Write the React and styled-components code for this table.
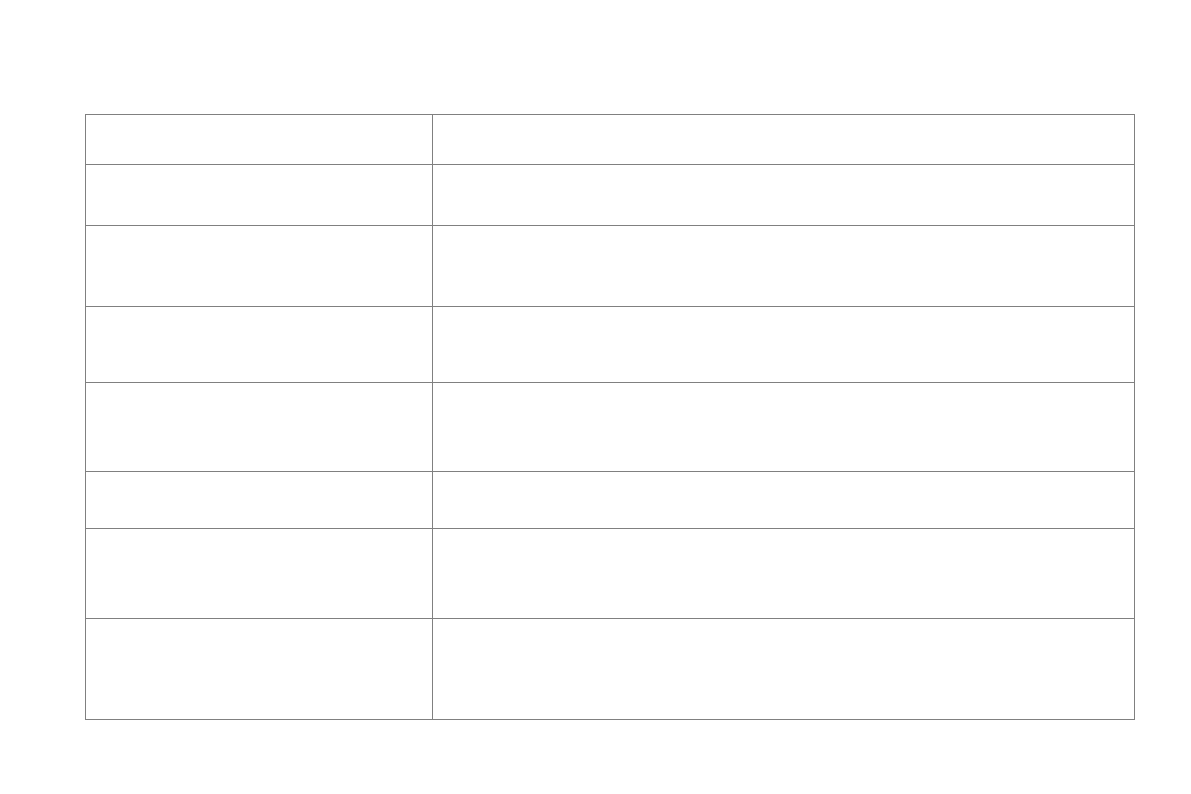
import styled, { createGlobalStyle } from "styled-components";

// style

const GlobalStyle = createGlobalStyle`
  html, body {
    margin: 0;
    padding: 0;
    background: #ffffff;
    font-family: "Liberation Sans", Arial, sans-serif;
  }
`;

const Page = styled.main`
  padding: 114px 0 0 85px;
  width: 100%;
  box-sizing: border-box;
`;

const Table = styled.div`
  display: grid;
  grid-template-columns: 347px 702px;
  width: 1050px;
  box-sizing: border-box;
  border-top: 1px solid #808080;
  border-left: 1px solid #808080;
`;

const Cell = styled.div`
  box-sizing: border-box;
  height: ${(p) => p.$h}px;
  border-right: 1px solid #808080;
  border-bottom: 1px solid #808080;
  font-size: 14px;
  color: #333;
`;

// code

const ROWS = [50, 61, 81, 76, 89, 57, 90, 101];

function App() {
  return (
    <>
      <GlobalStyle />
      <Page>
        <Table>
          {ROWS.map((h, i) => [
            <Cell key={`l${i}`} $h={h} />,
            <Cell key={`r${i}`} $h={h} />,
          ])}
        </Table>
      </Page>
    </>
  );
}

export default App;
